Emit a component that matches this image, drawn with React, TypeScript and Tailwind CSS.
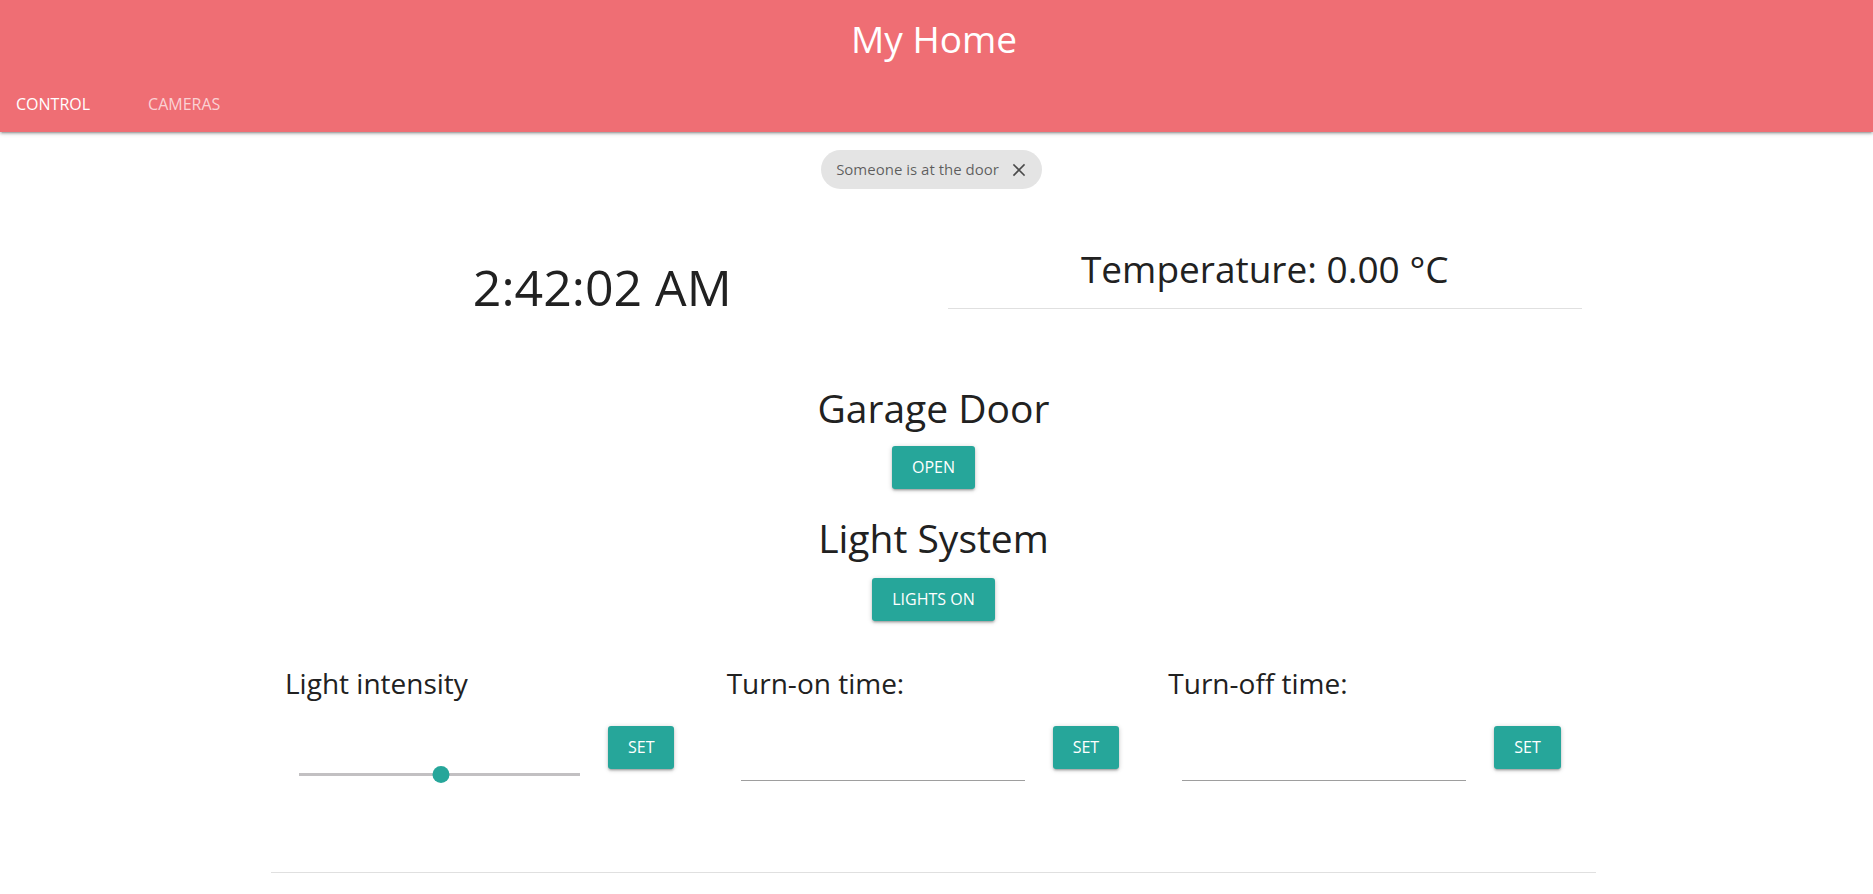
import { FC } from 'react';

const btnClass =
  'h-[43px] rounded-[3px] bg-[#26a69a] px-[20px] text-[16px] uppercase leading-[43px] text-white shadow-[0_2px_2px_0_rgba(0,0,0,0.14),0_3px_1px_-2px_rgba(0,0,0,0.12),0_1px_5px_0_rgba(0,0,0,0.2)]';

const CloseIcon: FC = () => (
  <svg width="14" height="14" viewBox="0 0 14 14" className="shrink-0">
    <path
      d="M2 2 L12 12 M12 2 L2 12"
      stroke="#4a4a4a"
      strokeWidth="1.6"
      strokeLinecap="square"
    />
  </svg>
);

const TimeInput: FC = () => (
  <div className="ml-[28px] h-[55px] w-[284px] border-b border-[#9e9e9e]" />
);

const Slider: FC<{ value: number }> = ({ value }) => (
  <div className="ml-[28px] w-[281px] pt-[47px]">
    <div className="relative h-[3px] bg-[#c2c0c2]">
      <div
        className="absolute top-[-7px] h-[17px] w-[17px] -translate-x-1/2 rounded-full bg-[#26a69a]"
        style={{ left: `${value}%` }}
      />
    </div>
  </div>
);

const App: FC = () => {
  const columns = [
    { label: 'Light intensity', slider: true },
    { label: 'Turn-on time:', slider: false },
    { label: 'Turn-off time:', slider: false },
  ];

  return (
    <div className="min-h-screen bg-white font-['Open_Sans',sans-serif] text-[#212121]">
      <header className="relative z-10 flex h-[132px] flex-col bg-[#ef6e74] text-white shadow-[0_2px_2px_0_rgba(0,0,0,0.14),0_3px_1px_-2px_rgba(0,0,0,0.12),0_1px_5px_0_rgba(0,0,0,0.2)]">
        <div className="h-[77px] pr-[5px] text-center text-[37px] leading-[77px]">
          My Home
        </div>
        <nav className="flex h-[55px] text-[16px] uppercase leading-[55px]">
          <span className="ml-[16px]">Control</span>
          <span className="ml-[58px] text-white/70">Cameras</span>
        </nav>
      </header>

      <div className="mt-[18px] flex justify-center pr-[10px]">
        <div className="flex h-[39px] items-center gap-[13px] rounded-full bg-[#e4e4e4] pl-[15px] pr-[16px] text-[15px] text-black/60">
          <span>Someone is at the door</span>
          <CloseIcon />
        </div>
      </div>

      <main className="ml-[271px] w-[1325px]">
        <div className="mt-[56px] grid h-[80px] grid-cols-2 items-start">
          <div className="mt-[12px] text-center text-[50px] leading-[60px]">
            2:42:02 AM
          </div>
          <div className="px-[14px]">
            <div className="border-b border-[#e0e0e0] pb-[15px] text-center text-[37px] leading-[48px]">
              Temperature: 0.00 °C
            </div>
          </div>
        </div>

        <section className="flex flex-col items-center">
          <h4 className="mt-[59px] text-[39px] leading-[48px]">Garage Door</h4>
          <button className={`mt-[14px] ${btnClass}`}>Open</button>
          <h4 className="mt-[25px] text-[39px] leading-[48px]">Light System</h4>
          <button className={`mt-[16px] ${btnClass}`}>Lights on</button>
        </section>

        <div className="mt-[44px] grid grid-cols-3">
          {columns.map((col) => (
            <div key={col.label}>
              <h5 className="pl-[14px] text-[28px] leading-[36px]">{col.label}</h5>
              <div className="mt-[25px] flex items-start">
                {col.slider ? <Slider value={50.5} /> : <TimeInput />}
                <button className={`ml-[28px] ${btnClass}`}>Set</button>
              </div>
            </div>
          ))}
        </div>

        <hr className="mt-[91px] border-t border-[#e0e0e0]" />
      </main>
    </div>
  );
};

export default App;
